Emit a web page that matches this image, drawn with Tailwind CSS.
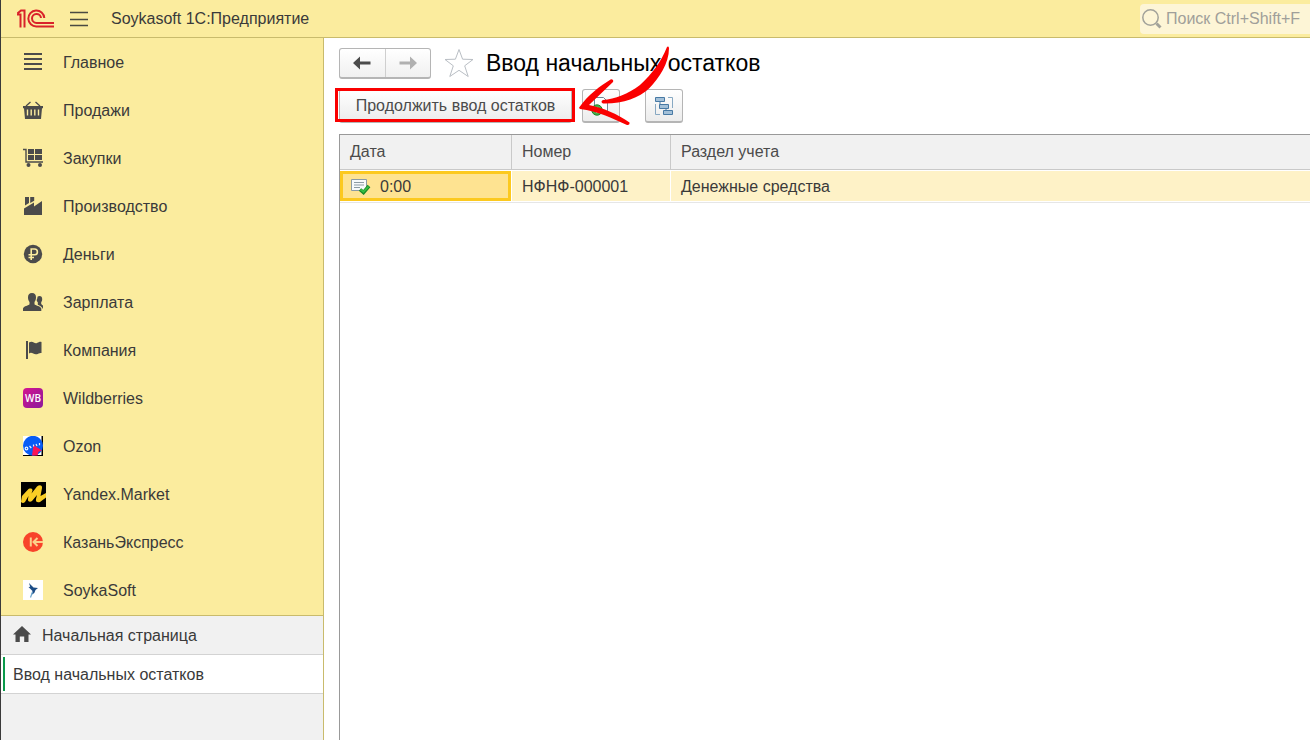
<!DOCTYPE html>
<html lang="ru">
<head>
<meta charset="utf-8">
<meta name="viewport" content="width=device-width, initial-scale=1">
<title>Ввод начальных остатков</title>
<script src="https://cdn.jsdelivr.net/npm/@tailwindcss/browser@4"></script>
</head>
<body class="flex h-screen flex-col overflow-hidden border-l border-[#3a3a3a] bg-white font-['Liberation_Sans',Arial,sans-serif] text-base text-[#3a3a3a]">
  <header class="flex h-[38px] shrink-0 items-center border-b border-[#c9bb6c] bg-[#fbec9e]">
    <svg class="ml-4 h-5 w-[38px]" viewBox="0 0 38 20" fill="none" stroke="#d9222a" stroke-width="2" role="img" aria-label="1С">
      <path d="M0 5.500H3.500V18.500M0.500 4.500 4 1.500H7.500V18.500"/>
      <path d="M27.300 9A8 8 0 1 0 19.500 17.500H37"/>
      <path d="M24 9A4.500 4.500 0 1 0 19.500 13.900H37"/>
    </svg>
    <button type="button" class="ml-3.5 flex h-8 w-5 items-center" aria-label="Меню">
      <svg class="h-5 w-5" viewBox="0 0 20 20" stroke="#4a4a42" stroke-width="1.300"><path d="M1 3.500h18M1 10.500h18M1 16.500h18"/></svg>
    </button>
    <span class="ml-[22px] whitespace-nowrap">Soykasoft 1С:Предприятие</span>
    <label class="ml-auto flex h-[30px] w-[170px] items-center rounded-l-sm bg-[#fdf5d6] pl-0.5">
      <svg class="h-5 w-5 shrink-0" viewBox="0 0 20 20" fill="none" stroke="#a2a29a"><circle cx="8.500" cy="8.500" r="7.700" stroke-width="1.500"/><path d="m14.500 14.500 4 4" stroke-width="3"/></svg>
      <input type="text" aria-label="Поиск" placeholder="Поиск Ctrl+Shift+F" class="ml-1 w-full min-w-0 bg-transparent outline-none placeholder:text-[#a09f9a]">
    </label>
  </header>

  <div class="flex min-h-0 flex-1">
    <aside class="flex w-[323px] shrink-0 flex-col border-r border-[#c9bb6c] bg-[#f1f1f1]">
      <nav class="border-b border-[#c9bb6c] bg-[#fbec9e]" aria-label="Разделы">
        <a href="#" class="flex h-12 items-center pl-5"><span class="flex w-6 justify-center"><svg class="h-5 w-5" viewBox="0 0 20 20" stroke="#4b4b4b" stroke-width="2"><path d="M1 2h18M1 7h18M1 12h18M1 17h18"/></svg></span><span class="ml-[18px] pt-0.5">Главное</span></a>
        <a href="#" class="flex h-12 items-center pl-5"><span class="flex w-6 justify-center"><svg class="h-5 w-5" viewBox="0 0 20 20" fill="#4b4b4b"><path d="M0 6h20v2.200h-1L18 19H2L1 8.200H0z"/><path d="M3 6 7.500 2M17 6 12.500 2" stroke="#4b4b4b" stroke-width="1.300"/><path d="M4.500 9.500v6M8.200 9.500v6M11.800 9.500v6M15.500 9.500v6" stroke="#fbec9e" stroke-width="1.400"/></svg></span><span class="ml-[18px] pt-0.5">Продажи</span></a>
        <a href="#" class="flex h-12 items-center pl-5"><span class="flex w-6 justify-center"><svg class="h-5 w-5" viewBox="0 0 20 20" fill="#4b4b4b"><path d="M5 1h6v5H5zM12 1h7v5h-7zM5 7h6v5H5zM12 7h7v5h-7z"/><path d="M0 1.500h3v12.500h17" fill="none" stroke="#4b4b4b" stroke-width="1.400"/><circle cx="5.500" cy="17" r="2"/><circle cx="17" cy="17" r="2"/></svg></span><span class="ml-[18px] pt-0.5">Закупки</span></a>
        <a href="#" class="flex h-12 items-center pl-5"><span class="flex w-6 justify-center"><svg class="h-5 w-5" viewBox="0 0 20 20" fill="#4b4b4b"><path d="M1 12.500 11 6.500v4L19 5v14H1zM2 1h4v6L2 9.500zM7.200 1h4v3.800L7.200 7z"/></svg></span><span class="ml-[18px] pt-0.5">Производство</span></a>
        <a href="#" class="flex h-12 items-center pl-5"><span class="flex w-6 justify-center"><svg class="h-5 w-5" viewBox="0 0 20 20" fill="none"><circle cx="10" cy="10" r="9.200" fill="#4b4b4b"/><path d="M8.200 16V5h3.300a2.800 2.800 0 0 1 0 5.800H5.500M5.500 13.500H11" stroke="#fbec9e" stroke-width="1.600"/></svg></span><span class="ml-[18px] pt-0.5">Деньги</span></a>
        <a href="#" class="flex h-12 items-center pl-5"><span class="flex w-6 justify-center"><svg class="h-5 w-5" viewBox="0 0 20 20" fill="#4b4b4b"><path d="M9 1c2.800 0 4 1.700 4 4.300 0 2-.6 3.600-1.500 4.600v2.400c.5 1.200 6.200 1.700 6.800 4.300V19H0v-2.400c.6-2.600 6-3.100 6.500-4.300V9.900C5.600 8.900 5 7.300 5 5.300 5 2.700 6.200 1 9 1z"/><path d="M14.500 4.800c.6-.6 1.200-.8 2-.8 1.800 0 2.700 1.300 2.700 3.100 0 1.500-.4 2.500-1 3.200v1.500c.4 1 1.800 1.300 1.800 2.200V17c-.8-2-3-3.300-5.200-4.300v-2.400c-1-1-1.200-1.800-1-2.800.5-.8.7-1.700.7-2.700z"/></svg></span><span class="ml-[18px] pt-0.5">Зарплата</span></a>
        <a href="#" class="flex h-12 items-center pl-5"><span class="flex w-6 justify-center"><svg class="h-5 w-5" viewBox="0 0 20 20" fill="#4b4b4b"><path d="M3 1h2v18H3zM6 2.500c4-2.300 5 1.500 8 .5 1.800-.6 2.500-1.500 4.500-1v11c-2-.4-3.200.8-4.700 1.200C10.500 15 9 11.300 6 13.500z"/></svg></span><span class="ml-[18px] pt-0.5">Компания</span></a>
        <a href="#" class="flex h-12 items-center pl-5"><span class="flex w-6 justify-center"><svg class="h-5 w-5" viewBox="0 0 20 20"><defs><linearGradient id="wb" x1="0" y1="0" x2="1" y2="1"><stop stop-color="#d4148f"/><stop offset="1" stop-color="#8b1a9c"/></linearGradient></defs><rect width="20" height="20" rx="4" fill="url(#wb)"/><text x="10" y="13.500" text-anchor="middle" font-family="Open Sans, sans-serif" font-weight="600" font-size="10" fill="#fff">WB</text></svg></span><span class="ml-[18px] pt-0.5">Wildberries</span></a>
        <a href="#" class="flex h-12 items-center pl-5"><span class="flex w-6 justify-center"><svg class="h-5 w-5" viewBox="0 0 20 20"><path fill="#fff" d="M0 0h20v20H0z"/><path d="M18.500 0H20v20H0v-1h18.500z" fill="#000"/><circle cx="10" cy="9.800" r="10" fill="#075cf5"/><path d="m10.500 9 8.500 5.500-3.500 1.300-1 3.700H9z" fill="#fa1455"/><g fill="none" stroke="#e9f1ff" stroke-width="1.200"><circle cx="3.500" cy="12.500" r="1.300"/><path d="m6.500 10 1.800 2M10.500 8.500v2M13 8l1 2M16.500 7v2.300"/></g></svg></span><span class="ml-[18px] pt-0.5">Ozon</span></a>
        <a href="#" class="flex h-12 items-center pl-5"><span class="flex w-6 justify-center"><svg class="h-[25px] w-[25px] shrink-0" viewBox="0 0 25 25"><path d="M0 0h25v25H0z"/><path d="M1 14 7.500 7c2-1 4-.5 4 1.500l-1 3L16 4.500c2.500-2 5.500-1.500 5 1.500l-1.500 8L25 11v4.500L19 20c-3 1-4.500-.5-4-3l1-4-5 6c-2 1.500-4.500.5-4-2l.5-3L4 20c-1.500 1.500-4 1-4-.5z" fill="#f9ce25"/></svg></span><span class="ml-[18px] pt-0.5">Yandex.Market</span></a>
        <a href="#" class="flex h-12 items-center pl-5"><span class="flex w-6 justify-center"><svg class="h-5 w-5" viewBox="0 0 20 20" fill="none"><circle cx="10" cy="10" r="10" fill="#f8432a"/><path d="M7.800 5.500v9M20 10h-9.500M14.500 6l-4 4 4 4" stroke="#fbd08a" stroke-width="2"/></svg></span><span class="ml-[18px] pt-0.5">КазаньЭкспресс</span></a>
        <a href="#" class="flex h-12 items-center pl-5"><span class="flex w-6 justify-center"><svg class="h-5 w-5" viewBox="0 0 20 20"><path fill="#fff" d="M0 0h20v20H0z"/><path d="M6 3 10.500 7.500l4.500.5-2.500 2-1.200 3-3 2 1.200-4-4-4 1.700-.3z" fill="#1b4c86"/><path d="m9.500 12-2 5.500" stroke="#6aa3cc" stroke-width="1.200"/></svg></span><span class="ml-[18px] pt-0.5">SoykaSoft</span></a>
        <div class="h-px"></div>
      </nav>
      <nav aria-label="Открытые окна">
        <a href="#" class="flex h-[39px] items-center gap-2.5 border-b border-[#d3d3d3] pl-3">
          <svg class="h-[18px] w-[18px]" viewBox="0 0 18 18" fill="#4b4b4b"><path d="M9 0 0 8.500h2.500V16h4.300v-5.500h4.400V16h4.300V8.500H18z"/></svg>
          <span class="pl-px pt-0.5">Начальная страница</span>
        </a>
        <a href="#" aria-current="page" class="flex h-[39px] items-center border-b border-[#d3d3d3] bg-white pl-0.5">
          <span class="h-[34px] w-0.5 bg-[#0b9a4b]"></span>
          <span class="ml-2 pt-0.5">Ввод начальных остатков</span>
        </a>
      </nav>
    </aside>

    <main class="flex min-w-0 flex-1 flex-col pl-[15px]">
      <div class="flex h-[50px] shrink-0 items-center">
        <div class="flex h-[31px] w-[92px] rounded-[3px] border border-b-2 border-[#b5b5b5] bg-linear-to-b from-white to-[#f0f0f0]">
          <button type="button" aria-label="Назад" class="flex flex-1 items-center justify-center border-r border-[#cfcfcf]"><svg class="h-4 w-[18px]" viewBox="0 0 18 16"><path d="M0 8 7 1.500V6.500H17.500v3H7v5z" fill="#4b4b4b"/></svg></button>
          <button type="button" aria-label="Вперед" class="flex flex-1 items-center justify-center"><svg class="h-4 w-[18px]" viewBox="0 0 18 16"><path d="M18 8 11 1.500V6.500H.5v3H11v5z" fill="#b0b0b0"/></svg></button>
        </div>
        <button type="button" aria-label="В избранное" class="ml-[13px]"><svg class="h-[30px] w-[30px]" viewBox="0 0 30 30" fill="#fff" stroke="#b9bec4"><path d="m15 1.500 3.600 9.700 10.400.3-8.300 6.300 3.500 10.700L15 22.300l-9.200 6.200 3.500-10.700L1 11.500l10.400-.3z"/></svg></button>
        <h1 class="ml-3 whitespace-nowrap text-[23px] text-black">Ввод начальных остатков</h1>
      </div>

      <div class="relative flex h-[46px] shrink-0 items-start pt-px">
        <button type="button" class="h-[34px] w-[233px] whitespace-nowrap rounded-[3px] border border-b-2 border-[#b5b5b5] bg-linear-to-b from-white to-[#ececec] text-[#4b4b4b]">Продолжить ввод остатков</button>
        <button type="button" aria-label="Создать" class="ml-2.5 flex h-[34px] w-[38px] items-center justify-center rounded-[3px] border border-b-2 border-[#b5b5b5] bg-linear-to-b from-white to-[#ececec]">
          <svg class="h-5 w-5" viewBox="0 0 20 20"><path d="M3.500 1.500h9l4 4v10h-13z" fill="#fff" stroke="#6f8797"/><circle cx="6" cy="14" r="5.200" fill="#45b04b" stroke="#23822c"/><path d="M6 11v6M3 14h6" stroke="#d8f5d8" stroke-width="1.500"/></svg>
        </button>
        <button type="button" aria-label="Структура" class="ml-[25px] flex h-[34px] w-[38px] items-center justify-center rounded-[3px] border border-b-2 border-[#b5b5b5] bg-linear-to-b from-white to-[#ececec]">
          <svg class="h-5 w-5" viewBox="0 0 20 20" stroke="#4779a4"><path d="M14 1.500h4.500V12M6 18.500H1.500V8" fill="none" stroke="#87a8c2"/><path d="M1.500 1.500h9v4h-9zM5.500 8.500h9v4h-9zM9.500 14.500h9v4h-9zM6 5.500v3M12 12.500v2" fill="#a3c0d8"/></svg>
        </button>
        <div class="pointer-events-none absolute -left-1 top-0 h-[34px] w-60 border-3 border-[#fa0000]"></div>
        <svg class="pointer-events-none absolute -top-[42px] left-[240px] h-[80px] w-[92px]" viewBox="579 46 92 80" fill="#fa0000" aria-hidden="true">
          <path d="M667 47Q668.500 45.800 669 48C669 64 659 78 649 88.500 639 98 622 104 603 103.500Q600 101.500 603 100C615 99 628 94 640 85 652 74 661 62 667 47z"/>
          <path d="M579.500 107C588 95 600 86 611 79.200Q614 79 613 82C605 90 597 97 589 105 603 107.500 618 114.500 629.500 122.500Q630 125.500 627 125C612 118.500 598 111 580 109Q578.500 108 579.500 107z"/>
        </svg>
      </div>

      <div class="min-h-0 flex-1 border-l border-t border-[#999]">
        <table class="w-full table-fixed border-separate border-spacing-0 text-left">
          <colgroup><col class="w-[172px]"><col class="w-[159px]"><col></colgroup>
          <thead>
            <tr class="h-[35px] bg-[#f1f1f1] text-[#4b4b4b]">
              <th scope="col" class="border-b border-r border-[#c9c9c9] px-2.5 font-normal">Дата</th>
              <th scope="col" class="border-b border-r border-[#c9c9c9] px-2.5 font-normal">Номер</th>
              <th scope="col" class="border-b border-[#c9c9c9] px-2.5 font-normal">Раздел учета</th>
            </tr>
          </thead>
          <tbody>
            <tr class="h-[33px]">
              <td class="border-b border-[#e6e6e6] py-px pr-px"><div class="flex h-[30px] items-center border-3 border-[#fcc91f] bg-[#fee391] pl-2"><svg class="h-[18px] w-5" viewBox="0 0 20 18"><path d="M.5 2.500h15v11H.5z" fill="#f7fafb" stroke="#8c9ba3"/><path d="M3 5.500h10M3 8h10M3 10.500h6" stroke="#8c9ba3"/><path d="m9 12.500 3.500 3 5.500-6.500" fill="none" stroke="#1b8a28" stroke-width="3.600"/><path d="m9.500 12.500 3 2.300 5-5.300" fill="none" stroke="#35c043" stroke-width="1.800"/></svg><span class="ml-[9px] pt-0.5">0:00</span></div></td>
              <td class="border-b border-[#e6e6e6] py-px pr-px"><div class="flex h-[30px] items-center bg-[#fef2c7] pl-2.5 pt-0.5">НФНФ-000001</div></td>
              <td class="border-b border-[#e6e6e6] py-px"><div class="flex h-[30px] items-center bg-[#fef2c7] pl-2.5 pt-0.5">Денежные средства</div></td>
            </tr>
          </tbody>
        </table>
      </div>
    </main>
  </div>
</body>
</html>
